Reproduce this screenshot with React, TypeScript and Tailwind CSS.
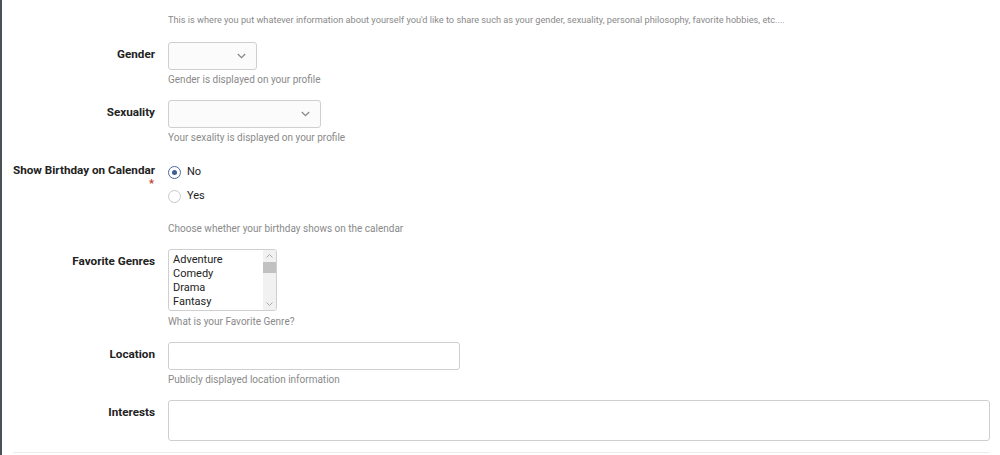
import React from "react";

const Help = ({ children, className = "" }: { children: React.ReactNode; className?: string }) => (
  <div className={`text-[10px] leading-[12px] text-[#8a8a8a] ${className}`}>{children}</div>
);

const Label = ({ children }: { children: React.ReactNode }) => (
  <div className="w-[153px] shrink-0 pt-[4px] text-right text-[11.7px] font-bold leading-[16px] text-[#222]">
    {children}
  </div>
);

const Chevron = () => (
  <svg width="9" height="6" viewBox="0 0 9 6" className="text-[#888]">
    <path d="M0.8 1l3.7 3.7L8.2 1" fill="none" stroke="currentColor" strokeWidth="1.3" />
  </svg>
);

const Select = ({ w }: { w: string }) => (
  <div
    className={`${w} flex h-[28px] items-center justify-end rounded-[3px] border border-[#cfcfcf] bg-[#fbfbfb] pr-[10px]`}
  >
    <Chevron />
  </div>
);

const Radio = ({ checked, label }: { checked?: boolean; label: string }) => (
  <div className="flex h-[24px] items-center">
    <div
      className={`flex h-[13px] w-[13px] items-center justify-center rounded-full border ${
        checked ? "border-[#4a6a9a]" : "border-[#c8c8c8]"
      } bg-white`}
    >
      {checked && <div className="h-[5px] w-[5px] rounded-full bg-[#3d5f93]" />}
    </div>
    <span className="ml-[6px] text-[11px] text-[#222]">{label}</span>
  </div>
);

export default function App() {
  return (
    <div
      className="relative min-h-[455px] w-[1000px] border-l-2 border-[#4b5159] bg-white"
      style={{ fontFamily: "Roboto, 'Liberation Sans', sans-serif" }}
    >
      <div className="pr-[10px] pt-[14px]">
        <div className="flex">
          <div className="w-[166px] shrink-0" />
          <div className="text-[9.2px] leading-[12px] text-[#8a8a8a]">
            This is where you put whatever information about yourself you'd like to share such as your gender,
            sexuality, personal philosophy, favorite hobbies, etc....
          </div>
        </div>

        {/* Gender */}
        <div className="mt-[16px] flex gap-[13px]">
          <Label>Gender</Label>
          <div>
            <Select w="w-[89px]" />
            <Help className="mt-[4px]">Gender is displayed on your profile</Help>
          </div>
        </div>

        {/* Sexuality */}
        <div className="mt-[14px] flex gap-[13px]">
          <Label>Sexuality</Label>
          <div>
            <Select w="w-[153px]" />
            <Help className="mt-[4px]">Your sexality is displayed on your profile</Help>
          </div>
        </div>

        {/* Birthday */}
        <div className="mt-[14px] flex gap-[13px]">
          <div className="w-[153px] shrink-0 pt-[4px] text-right text-[11.7px] font-bold leading-[16px] text-[#222]">
            <div>Show Birthday on Calendar</div>
            <div className="mr-[1px] mt-[1px] text-[11px] leading-[10px] text-[#c0392b]">*</div>
          </div>
          <div>
            <div className="pt-[2px]">
              <Radio checked label="No" />
              <Radio label="Yes" />
            </div>
            <Help className="mt-[15px]">Choose whether your birthday shows on the calendar</Help>
          </div>
        </div>

        {/* Favorite Genres */}
        <div className="mt-[14px] flex gap-[13px]">
          <Label>Favorite Genres</Label>
          <div>
            <div className="flex h-[62px] w-[109px] overflow-hidden rounded-[3px] border border-[#cfcfcf] bg-white">
              <div className="flex-1 pl-[4px] pt-[3px] text-[11px] leading-[14px] text-[#222]">
                <div>Adventure</div>
                <div>Comedy</div>
                <div>Drama</div>
                <div>Fantasy</div>
              </div>
              <div className="flex w-[13px] flex-col bg-[#f1f1f1]">
                <div className="flex h-[12px] items-center justify-center">
                  <svg width="7" height="4" viewBox="0 0 7 4">
                    <path d="M0.5 3.5l3-3 3 3" fill="none" stroke="#a0a0a0" strokeWidth="0.9" />
                  </svg>
                </div>
                <div className="h-[11px] bg-[#c1c1c1]" />
                <div className="flex-1" />
                <div className="flex h-[12px] items-center justify-center">
                  <svg width="7" height="4" viewBox="0 0 7 4">
                    <path d="M0.5 0.5l3 3 3-3" fill="none" stroke="#a0a0a0" strokeWidth="0.9" />
                  </svg>
                </div>
              </div>
            </div>
            <Help className="mt-[5px]">What is your Favorite Genre?</Help>
          </div>
        </div>

        {/* Location */}
        <div className="mt-[14px] flex gap-[13px]">
          <Label>Location</Label>
          <div>
            <div className="h-[28px] w-[292px] rounded-[3px] border border-[#cfcfcf] bg-white" />
            <Help className="mt-[4px]">Publicly displayed location information</Help>
          </div>
        </div>

        {/* Interests */}
        <div className="mt-[14px] flex gap-[13px]">
          <Label>Interests</Label>
          <div className="flex-1">
            <div className="h-[41px] w-full rounded-[3px] border border-[#cfcfcf] bg-white" />
          </div>
        </div>

        <div className="ml-[11px] mt-[11px] h-px bg-[#ececec]" />
      </div>
    </div>
  );
}
